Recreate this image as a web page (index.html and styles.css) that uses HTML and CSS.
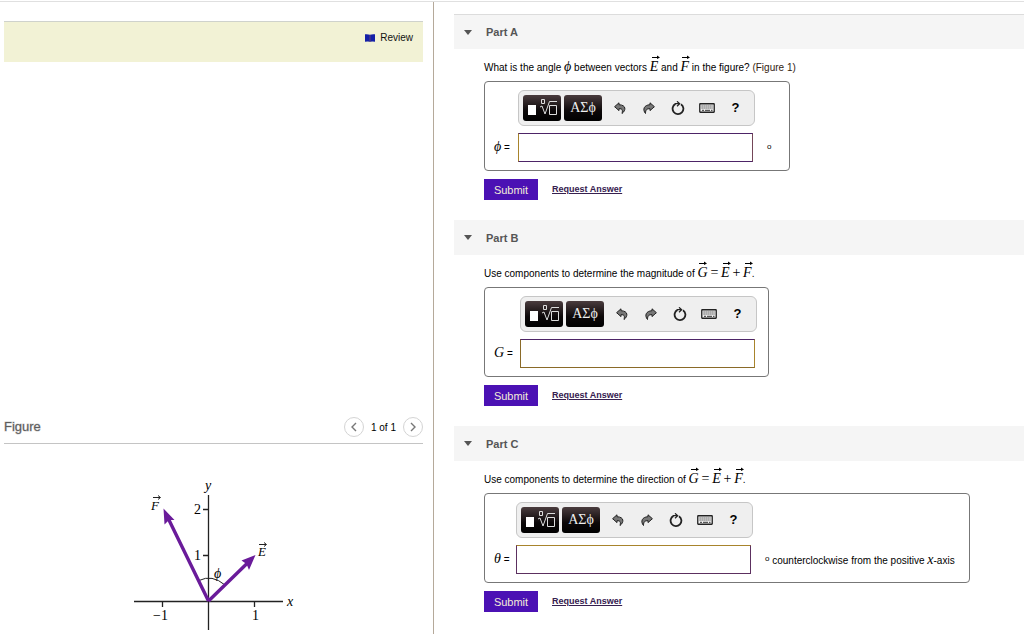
FILE: index.html
```html
<!DOCTYPE html>
<html lang="en">
<head>
<meta charset="utf-8">
<meta name="viewport" content="width=device-width, initial-scale=1">
<title>Vectors</title>
<link rel="stylesheet" href="styles.css">
</head>
<body>
<svg class="defs" aria-hidden="true">
  <symbol id="vec" viewBox="0 0 8 4"><path d="M0 2.500H6.500" stroke="currentColor" fill="none"/><path d="M5 .5L8 2.500L5 4Z" fill="currentColor"/></symbol>
  <symbol id="template" viewBox="0 0 38 26"><rect x="5" y="10" width="8" height="10" fill="#fff"/><path d="M18.500 4.500h3v4h-3zM26.500 10.500h7v9h-7zM17 12l2-1l3 8l4.500-12.500h7.500" fill="none" stroke="#ddd"/></symbol>
  <symbol id="undo" viewBox="0 0 12 12"><path d="M5 .8L0.600 4.700L5 8.600V6.700C8 6.600 9 7.700 8 11.500C12 8.500 12.500 3 5 2.700Z" fill="#777" stroke="#222"/></symbol>
  <symbol id="redo" viewBox="0 0 12 12"><path d="M7 .8L11.400 4.700L7 8.600V6.700C4 6.600 2.500 7.500 2.500 11.500C-.8 7.500 1 3 7 2.700Z" fill="#777" stroke="#222"/></symbol>
  <symbol id="reset" viewBox="0 0 14 14"><path d="M10 3.200A5.400 5.400 0 1 1 4.500 2.900" fill="none" stroke="#222" stroke-width="1.800"/><path d="M4 2.700H8.500M6 .3L8.700 2.700L6 5.200" fill="none" stroke="#222" stroke-width="1.200"/></symbol>
  <symbol id="keyboard" viewBox="0 0 16 10"><rect x=".75" y=".75" width="14.500" height="8.500" rx=".5" fill="#eee" stroke="#222" stroke-width="1.300"/><path d="M2.500 3h11M2.500 5h11" stroke="#333" stroke-width="1.200" stroke-dasharray="1.200 .8"/><path d="M3 7.300h2M6 7.300h5M12 7.300h1.500" stroke="#333"/></symbol>
</svg>
<div class="page">
  <aside class="side">
    <div class="review">
      <a class="review-link" href="#review"><svg class="book" viewBox="0 0 10 8" aria-hidden="true"><path d="M0 .3Q3 0 5 .7Q7 0 10 .3V7.700Q7 7.200 5 7.800Q3 7.200 0 7.700Z" fill="#1420a8"/><path d="M5 1V8" stroke="#6b4a70" stroke-width=".8"/></svg>Review</a>
    </div>
    <section class="figure">
      <header class="figure-head">
        <h2 class="figure-title">Figure</h2>
        <nav class="pager" aria-label="Figures">
          <button class="round" aria-label="Previous"><svg viewBox="0 0 6 10"><path d="M5 1L1 5L5 9"/></svg></button>
          <span class="count">1 of 1</span>
          <button class="round" aria-label="Next"><svg viewBox="0 0 6 10"><path d="M1 1L5 5L1 9"/></svg></button>
        </nav>
      </header>
      <svg class="graph" viewBox="120 470 190 164" role="img" aria-label="Vectors E and F from the origin">
        <path class="axis" d="M134 601.500H283M208.500 495V630M203 509.500h5M203 555.500h5M162.500 602v5M254.500 602v5"/>
        <path class="arc" d="M199 580.500Q212 574 225 585"/>
        <path class="vector" d="M208.500 601L168 518M208.500 601L247 563.500"/>
        <path class="head" d="M163.500 508.500L164.500 524.500L169 520L174.500 520ZM255.500 555L241.500 560.500L246.500 564L249 570Z"/>
        <path class="label-arrow" d="M153 497.500h7M158 495.500l2.500 2l-2.500 2M259 544.500h7M264 542.500l2.500 2l-2.500 2"/>
        <text class="it" x="205" y="490">y</text><text class="it" x="287" y="606">x</text>
        <text class="it small" x="151" y="510">F</text><text class="it small" x="258" y="556">E</text>
        <text class="it" x="214" y="578">ϕ</text>
        <text x="194" y="514">2</text><text x="194" y="560">1</text>
        <text x="153" y="620">−1</text><text x="252" y="620">1</text>
      </svg>
    </section>
  </aside>
  <main class="parts">
    <section class="part">
      <h2 class="part-head"><svg class="caret" viewBox="0 0 8 5"><path d="M0 0H8L4 5Z"/></svg>Part A</h2>
      <div class="part-body">
        <p class="question">What is the angle <i class="m">ϕ</i> between vectors <i class="m v">E<svg><use href="#vec"/></svg></i> and <i class="m v">F<svg><use href="#vec"/></svg></i> in the figure? <a class="fig-link" href="#figure">(Figure 1)</a></p>
        <div class="answer answer-a">
          <div class="tools">
            <button class="key" aria-label="Templates"><svg class="tpl"><use href="#template"/></svg></button>
            <button class="key">ΑΣϕ</button>
            <button class="tool" aria-label="Undo"><svg class="i12"><use href="#undo"/></svg></button>
            <button class="tool" aria-label="Redo"><svg class="i12"><use href="#redo"/></svg></button>
            <button class="tool" aria-label="Reset"><svg class="i14"><use href="#reset"/></svg></button>
            <button class="tool" aria-label="Keyboard"><svg class="kb"><use href="#keyboard"/></svg></button>
            <button class="tool" aria-label="Help">?</button>
          </div>
          <label class="name" for="phi"><i class="m">ϕ</i> =</label>
          <input class="field" id="phi" type="text">
          <span class="unit"><span class="deg">o</span></span>
        </div>
        <div class="actions"><button class="submit">Submit</button><a class="request" href="#a">Request Answer</a></div>
      </div>
    </section>
    <section class="part">
      <h2 class="part-head"><svg class="caret" viewBox="0 0 8 5"><path d="M0 0H8L4 5Z"/></svg>Part B</h2>
      <div class="part-body">
        <p class="question">Use components to determine the magnitude of <i class="m v">G<svg><use href="#vec"/></svg></i> <span class="m">=</span> <i class="m v">E<svg><use href="#vec"/></svg></i> <span class="m">+</span> <i class="m v">F<svg><use href="#vec"/></svg></i>.</p>
        <div class="answer answer-b">
          <div class="tools">
            <button class="key" aria-label="Templates"><svg class="tpl"><use href="#template"/></svg></button>
            <button class="key">ΑΣϕ</button>
            <button class="tool" aria-label="Undo"><svg class="i12"><use href="#undo"/></svg></button>
            <button class="tool" aria-label="Redo"><svg class="i12"><use href="#redo"/></svg></button>
            <button class="tool" aria-label="Reset"><svg class="i14"><use href="#reset"/></svg></button>
            <button class="tool" aria-label="Keyboard"><svg class="kb"><use href="#keyboard"/></svg></button>
            <button class="tool" aria-label="Help">?</button>
          </div>
          <label class="name" for="g"><i class="m">G</i> =</label>
          <input class="field" id="g" type="text">
        </div>
        <div class="actions"><button class="submit">Submit</button><a class="request" href="#b">Request Answer</a></div>
      </div>
    </section>
    <section class="part">
      <h2 class="part-head"><svg class="caret" viewBox="0 0 8 5"><path d="M0 0H8L4 5Z"/></svg>Part C</h2>
      <div class="part-body">
        <p class="question">Use components to determine the direction of <i class="m v">G<svg><use href="#vec"/></svg></i> <span class="m">=</span> <i class="m v">E<svg><use href="#vec"/></svg></i> <span class="m">+</span> <i class="m v">F<svg><use href="#vec"/></svg></i>.</p>
        <div class="answer answer-c">
          <div class="tools">
            <button class="key" aria-label="Templates"><svg class="tpl"><use href="#template"/></svg></button>
            <button class="key">ΑΣϕ</button>
            <button class="tool" aria-label="Undo"><svg class="i12"><use href="#undo"/></svg></button>
            <button class="tool" aria-label="Redo"><svg class="i12"><use href="#redo"/></svg></button>
            <button class="tool" aria-label="Reset"><svg class="i14"><use href="#reset"/></svg></button>
            <button class="tool" aria-label="Keyboard"><svg class="kb"><use href="#keyboard"/></svg></button>
            <button class="tool" aria-label="Help">?</button>
          </div>
          <label class="name" for="theta"><i class="m">θ</i> =</label>
          <input class="field" id="theta" type="text">
          <span class="unit"><span class="deg">o</span> counterclockwise from the positive <i class="m">x</i>-axis</span>
        </div>
        <div class="actions"><button class="submit">Submit</button><a class="request" href="#c">Request Answer</a></div>
      </div>
    </section>
  </main>
</div>
</body>
</html>
```
FILE: styles.css
```css
* { box-sizing: border-box; }
body { margin: 0; background: #fff; color: #000; font: 10px/16px "Liberation Sans", Arial, sans-serif; }
button { padding: 0; border: 0; background: none; color: inherit; font: inherit; }
h2, p { margin: 0; }
svg { display: block; }
.defs { position: absolute; width: 0; height: 0; }

.page { display: grid; grid-template-columns: 434px 1fr; min-height: calc(100vh - 1px); margin-top: 1px; border-top: 1px solid #e0e0e0; }

/* Left column */
.side { display: flex; flex-direction: column; justify-content: space-between; padding: 19px 10px 0 4px; border-right: 1px solid #b5a99a; }
.review { display: flex; justify-content: flex-end; height: 41px; padding: 8px 10px; background: #f2f2d5; border-top: 1px solid #cfd2cc; }
.review-link { display: flex; align-items: center; gap: 5px; height: 16px; color: #111; text-decoration: none; }
.book { width: 10px; height: 8px; }
.figure-head { display: flex; justify-content: space-between; align-items: center; height: 30px; padding-bottom: 4px; border-bottom: 1px solid #c4c4c4; }
.figure-title { color: #444; font-size: 13px; font-weight: 400; -webkit-text-stroke: 1px #8886; }
.pager { display: flex; align-items: center; gap: 7px; }
.count { padding-top: 2px; }
.round { display: grid; place-items: center; width: 20px; height: 20px; border: 1px solid #d4d4d4; border-radius: 50%; }
.round svg { width: 6px; height: 10px; fill: none; stroke: #777; stroke-width: 1.4; }
.graph { width: 190px; height: 164px; margin: 26px 0 0 116px; font: 14px "Liberation Serif", serif; }
.graph .it { font-style: italic; }
.graph .small { font-size: 13px; }
.axis, .arc, .label-arrow { fill: none; stroke: #222; }
.axis { stroke-width: 1.3; }
.vector { fill: none; stroke: #6a1b9a; stroke-width: 3.4; }
.head { fill: #6a1b9a; }

/* Right column */
.parts { min-width: 0; padding: 12px 0 0 20px; }
.part { margin-bottom: 20px; }
.part-head { display: flex; align-items: center; gap: 14px; height: 35px; padding-left: 10px; background: #f5f5f5; color: #555; font-size: 11px; font-weight: 700; }
.part:first-child .part-head { border-top: 1px solid #dcdcdc; }
.caret { width: 8px; height: 5px; fill: #555; }
.part-body { padding: 10px 0 0 30px; }
.question { height: 22px; white-space: nowrap; }
.m { font-family: "Liberation Serif", serif; font-size: 14px; line-height: 16px; }
.v { position: relative; }
.v svg { position: absolute; left: 2px; top: -4px; width: 8px; height: 4px; }
.fig-link { color: #321; text-decoration: none; }

.answer { display: inline-grid; grid-template-columns: 24px auto auto; grid-template-rows: 36px 29px; gap: 7px 0; height: 90px; padding: 8px 14px 8px 9px; border: 1px solid #777; border-radius: 4px; vertical-align: top; }
.answer-a { padding-right: 18px; }
.answer-b { grid-template-columns: 26px auto auto; padding-right: 11px; }
.answer-c { grid-template-columns: 22px auto auto; }
.tools { grid-column: 2; display: flex; align-items: center; width: 237px; padding: 0 4px; border: 1px solid #c6c6c6; border-radius: 6px; background: #efefef; }
.key { display: grid; place-items: center; width: 38px; height: 26px; margin-right: 3px; border-radius: 3px; background: linear-gradient(#4a3c3e, #0c0809 60%, #000); color: #eee; font: 14px/20px "Liberation Serif", serif; }
.tpl { width: 38px; height: 26px; }
.tool { display: grid; place-items: center; width: 29px; height: 26px; font-size: 13px; font-weight: 700; }
.i12 { width: 12px; height: 12px; }
.i14 { width: 14px; height: 14px; }
.kb { width: 16px; height: 10px; }
.name { grid-column: 1; grid-row: 2; align-self: center; white-space: nowrap; }
.field { grid-column: 2; grid-row: 2; width: 235px; height: 29px; padding: 0 6px; border: 1px solid #74521f; border-radius: 0; background: #fff; font: inherit; }
.answer-a .field { border-color: #4d2467 #744658 #4d2467 #a8842c; }
.answer-b .field { border-color: #4d2467 #a8842c #8a6a28 #8a6a28; }
.answer-c .field { border-color: #a8842c #5c3060 #5c3060 #5c3060; }
.unit { grid-column: 3; grid-row: 2; align-self: center; padding-left: 12px; white-space: nowrap; }
.deg { font-size: 8px; vertical-align: 3px; }

.actions { display: flex; align-items: center; gap: 14px; padding-top: 8px; }
.submit { width: 54px; height: 21px; background: #4b11b4; color: #f4ecd8; font-size: 11px; }
.request { padding-bottom: 1px; color: #36204f; font-size: 9px; font-weight: 700; text-decoration: underline; }
```
